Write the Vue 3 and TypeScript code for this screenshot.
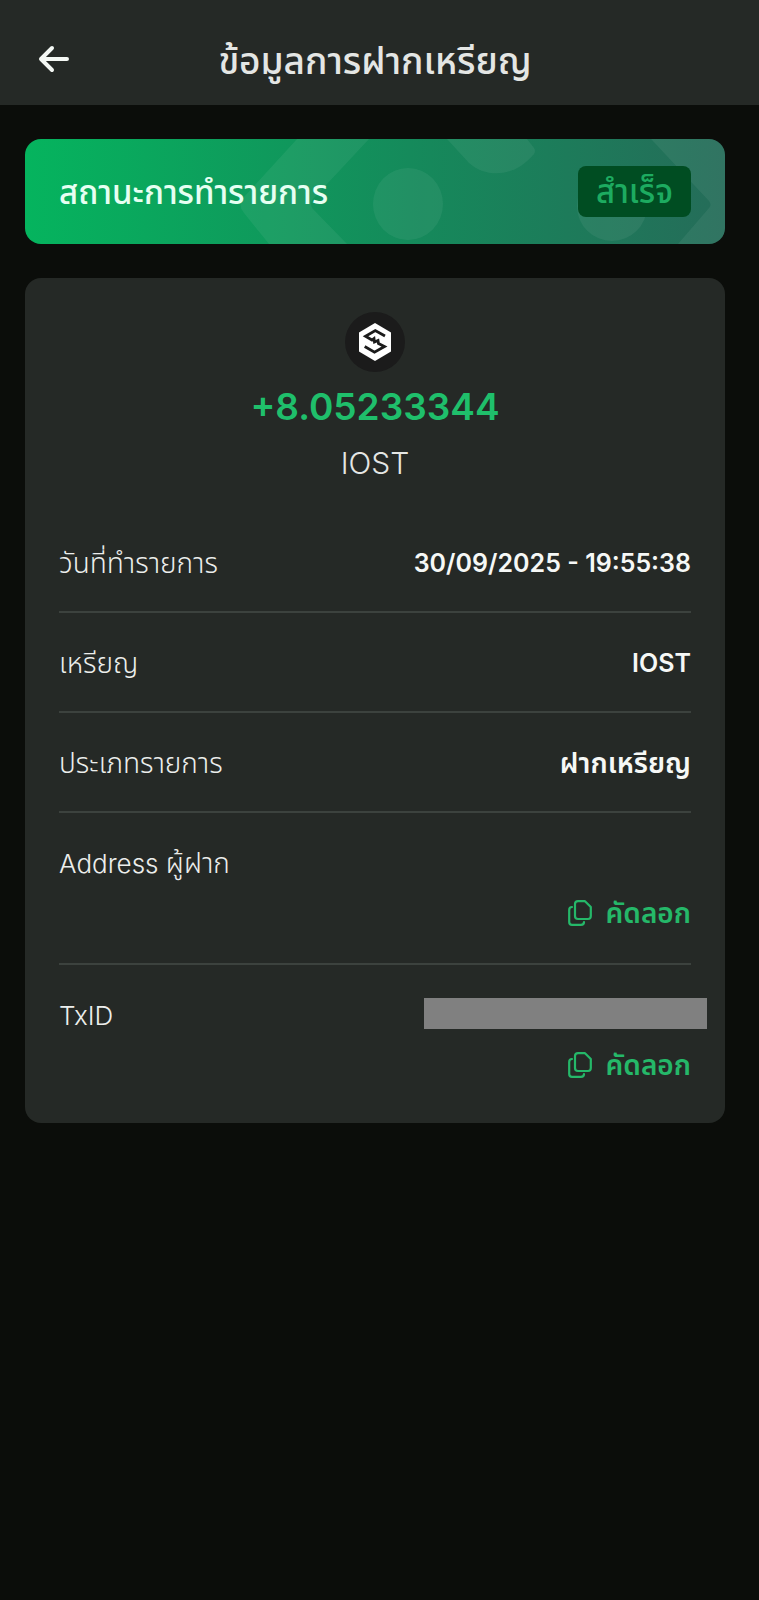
<script setup lang="ts">
interface DetailRow {
  latinLabel?: string
  label?: string
  value?: string
  valueLatin?: boolean
  copyable?: boolean
  masked?: boolean
}

const rows: DetailRow[] = [
  { label: 'วันที่ทำรายการ', value: '30/09/2025 - 19:55:38', valueLatin: true },
  { label: 'เหรียญ', value: 'IOST', valueLatin: true },
  { label: 'ประเภทรายการ', value: 'ฝากเหรียญ' },
  { latinLabel: 'Address ', label: 'ผู้ฝาก', copyable: true },
  { latinLabel: 'TxID', copyable: true, masked: true },
]
</script>

<template>
  <div class="screen">
    <header class="topbar">
      <button class="back" type="button" aria-label="กลับ">
        <svg width="32" height="28" viewBox="0 0 32 28" fill="none" stroke="currentColor" stroke-width="4" stroke-linecap="round" stroke-linejoin="round">
          <path d="M29 14H3M14 3L3 14L14 25" />
        </svg>
      </button>
      <h1>ข้อมูลการฝากเหรียญ</h1>
    </header>

    <main class="content">
      <section class="banner">
        <svg class="pattern" viewBox="0 0 700 105" preserveAspectRatio="xMaxYMid slice" fill="#fff" fill-opacity="0.06" aria-hidden="true">
          <path d="M272 0H344L288 60Q284 65 288 70L322 105H244L219 74Q212 66 219 58Z" />
          <ellipse cx="383" cy="65" rx="35" ry="36" />
          <path d="M422 0H502L509 9Q511 12 509 15C489 39 461 39 444 24Z" />
          <circle cx="587" cy="67" r="35" />
          <path d="M626 0H700V105H653L684 69Q687 66 684 62Z" />
        </svg>
        <h2>สถานะการทำรายการ</h2>
        <span class="badge">สำเร็จ</span>
      </section>

      <section class="card">
        <div class="summary">
          <svg class="coin" width="60" height="60" viewBox="0 0 60 60" aria-hidden="true">
            <circle cx="30" cy="30" r="30" fill="#1b1b1b" />
            <path d="M30 11L46 20.500V39.500L30 49L14 39.500V20.500Z" fill="#fff" />
            <path d="M40 24L30.300 18.500L20.500 24.300L27 28L29 26.500L29.500 30L33 28.500L33.500 31.500L39.500 34.500L29.500 40.200L19.700 34.500" fill="none" stroke="#1b1b1b" stroke-width="2.800" />
          </svg>
          <p class="amount">+8.05233344</p>
          <p class="symbol">IOST</p>
        </div>

        <dl class="details">
          <div v-for="(row, index) in rows" :key="index" class="row">
            <dt><span v-if="row.latinLabel" class="latin">{{ row.latinLabel }}</span>{{ row.label }}</dt>
            <dd>
              <span v-if="!row.masked" class="value" :class="{ figures: row.valueLatin }">{{ row.value }}</span>
              <span v-else class="mask"></span>
              <button v-if="row.copyable" class="copy" type="button">
                <svg width="24" height="26" viewBox="0 0 24 26" fill="none" stroke="currentColor" stroke-width="2.200" stroke-linecap="round" stroke-linejoin="round">
                  <path d="M10 1.200H17L22.800 7V16Q22.800 19 20 19H10Q7 19 7 16V4Q7 1.200 10 1.200Z" />
                  <path d="M4 7Q1.200 7 1.200 10V22Q1.200 24.800 4 24.800H13Q16 24.800 16 22" />
                </svg>
                <span>คัดลอก</span>
              </button>
            </dd>
          </div>
        </dl>
      </section>
    </main>
  </div>
</template>

<style>
body {
  margin: 0;
  background: #0b0d0a;
}
</style>

<style scoped>
.screen {
  min-height: 100vh;
  box-sizing: border-box;
  background: #0b0d0a;
  color: #e4e6e4;
  font-family: Inter, "Noto Sans Thai", "Noto Sans", sans-serif;
}

h1, h2, p, dl, dd {
  margin: 0;
}

button {
  padding: 0;
  border: 0;
  background: none;
  font: inherit;
  cursor: pointer;
}

.topbar {
  display: grid;
  grid-template-columns: 48px 1fr 48px;
  align-items: center;
  height: 105px;
  padding: 16px 34px 0 25px;
  box-sizing: border-box;
  background: #252926;
}

.back {
  display: flex;
  justify-content: flex-end;
  padding: 0 3px 4px 0;
  color: #f4f8f4;
}

h1 {
  font-size: 37px;
  line-height: 48px;
  font-weight: 500;
  text-align: center;
}

.content {
  display: flex;
  flex-direction: column;
  gap: 34px;
  padding: 34px 34px 34px 25px;
}

.banner {
  position: relative;
  display: flex;
  align-items: center;
  justify-content: space-between;
  height: 105px;
  padding: 0 34px;
  border-radius: 16px;
  box-sizing: border-box;
  overflow: hidden;
  background: linear-gradient(90deg, #05b45e, #158a5b 55%, #256c59);
}

.pattern {
  position: absolute;
  inset: 0;
  width: 100%;
  height: 100%;
}

h2 {
  position: relative;
  color: #e6fff2;
  font-size: 33px;
  line-height: 40px;
  font-weight: 500;
}

.badge {
  position: relative;
  padding: 0 18px;
  border-radius: 8px;
  background: #004d22;
  color: #1dab60;
  font-size: 33px;
  line-height: 51px;
  font-weight: 500;
}

.card {
  padding: 34px 34px 8px;
  border-radius: 16px;
  background: #252926;
}

.summary {
  display: flex;
  flex-direction: column;
  align-items: center;
}

.amount {
  margin-top: 12px;
  color: #1fbf6b;
  font-size: 37px;
  line-height: 46px;
  font-weight: 600;
}

.symbol {
  margin-top: 15px;
  font-size: 30px;
  line-height: 36px;
  font-weight: 300;
}

.details {
  margin-top: 32px;
}

.row {
  display: flex;
  justify-content: space-between;
  padding: 33px 0 31px;
  border-bottom: 2px solid #3c423e;
  font-size: 28px;
  line-height: 34px;
}

.row:last-child {
  border-bottom: 0;
}

dt {
  color: #eceeec;
  font-weight: 300;
}

.latin {
  font-size: 26px;
}

dd {
  display: flex;
  flex-direction: column;
  align-items: flex-end;
  gap: 14px;
  color: #f6f8f6;
  font-weight: 600;
}

.value {
  min-height: 34px;
}

.figures {
  font-size: 25px;
}

.mask {
  width: 283px;
  height: 31px;
  margin: 0 -16px 3px 0;
  background: #808080;
}

.copy {
  display: flex;
  align-items: center;
  gap: 14px;
  height: 38px;
  color: #25b869;
}
</style>
